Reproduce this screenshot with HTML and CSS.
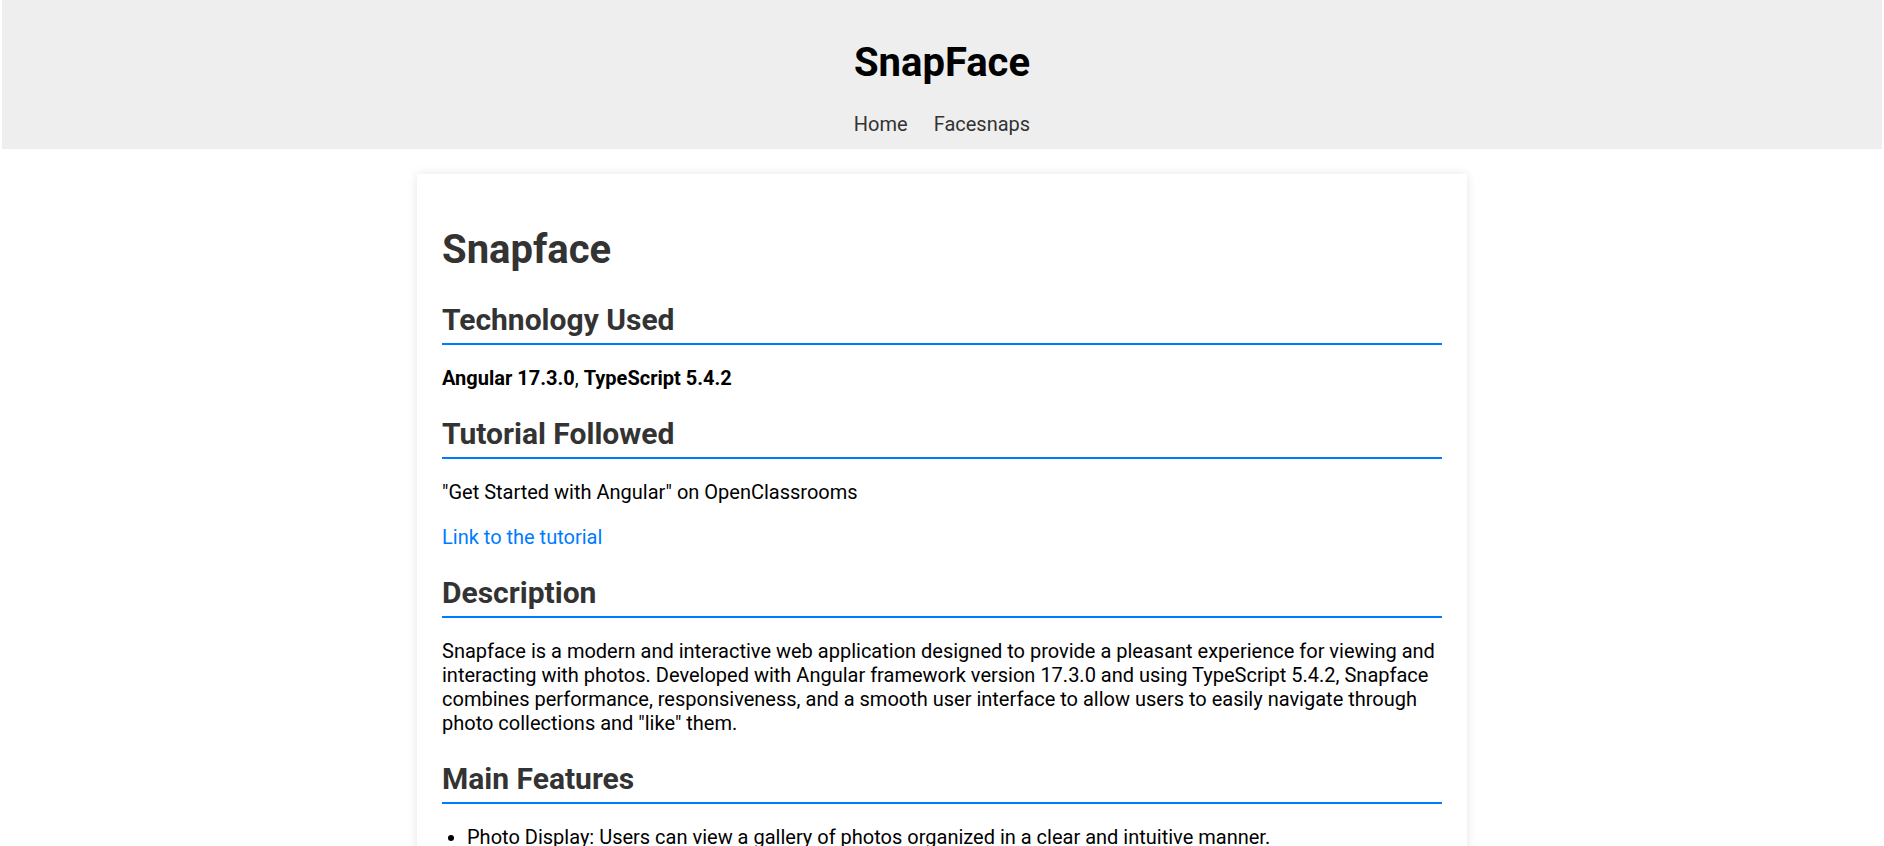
FILE: index.html
```html
<!DOCTYPE html>
<html lang="en">
<head>
<meta charset="utf-8">
<title>SnapFace</title>
<link rel="stylesheet" href="styles.css">
</head>
<body>
<header class="site-header">
  <h1 class="site-title">SnapFace</h1>
  <nav class="site-nav">
    <a href="#" class="nav-link">Home</a>
    <a href="#" class="nav-link">Facesnaps</a>
  </nav>
</header>
<main class="page">
  <article class="card">
    <h1 class="card-title">Snapface</h1>
    <h2 class="section-title">Technology Used</h2>
    <p><strong>Angular 17.3.0</strong>, <strong>TypeScript 5.4.2</strong></p>
    <h2 class="section-title">Tutorial Followed</h2>
    <p>"Get Started with Angular" on OpenClassrooms</p>
    <p><a href="#" class="text-link">Link to the tutorial</a></p>
    <h2 class="section-title">Description</h2>
    <p>Snapface is a modern and interactive web application designed to provide a pleasant experience for viewing and interacting with photos. Developed with Angular framework version 17.3.0 and using TypeScript 5.4.2, Snapface combines performance, responsiveness, and a smooth user interface to allow users to easily navigate through photo collections and "like" them.</p>
    <h2 class="section-title">Main Features</h2>
    <ul class="features">
      <li>Photo Display: Users can view a gallery of photos organized in a clear and intuitive manner.</li>
      <li>Like: Users can like the photos they prefer.</li>
      <li>Details: Users can view the details of each photo.</li>
    </ul>
  </article>
</main>
</body>
</html>
```

FILE: styles.css
```css
html, body {
  margin: 0;
  padding: 0;
}

body {
  font-family: Roboto, "Liberation Sans", sans-serif;
  font-size: 20px;
  color: #000;
  background: #fff;
}

.site-header {
  background: #eeeeee;
  margin: 0 2px;
  padding: 12px 0 13px;
  text-align: center;
}

.site-title {
  font-size: 40px;
  font-weight: 700;
  color: #000;
  margin: 27px 0 26px;
}

.site-nav {
  display: flex;
  justify-content: center;
  gap: 26px;
}

.nav-link {
  color: #333;
  text-decoration: none;
}

.page {
  padding: 25px 0;
}

.card {
  max-width: 1000px;
  margin: 0 auto;
  padding: 25px;
  background: #fff;
  box-shadow: 0 0 10px rgba(0, 0, 0, 0.1);
}

.card-title {
  font-size: 40px;
  color: #333;
  margin: 27px 0 29px;
}

.section-title {
  font-size: 30px;
  color: #333;
  margin: 26px 0 20px;
  padding-bottom: 6px;
  border-bottom: 2px solid #007bff;
}

.card p {
  margin: 21px 0;
}

.text-link {
  color: #007bff;
  text-decoration: none;
}

.features {
  margin: 21px 0;
  padding-left: 25px;
}

.features li {
  margin-bottom: 8px;
}
```
